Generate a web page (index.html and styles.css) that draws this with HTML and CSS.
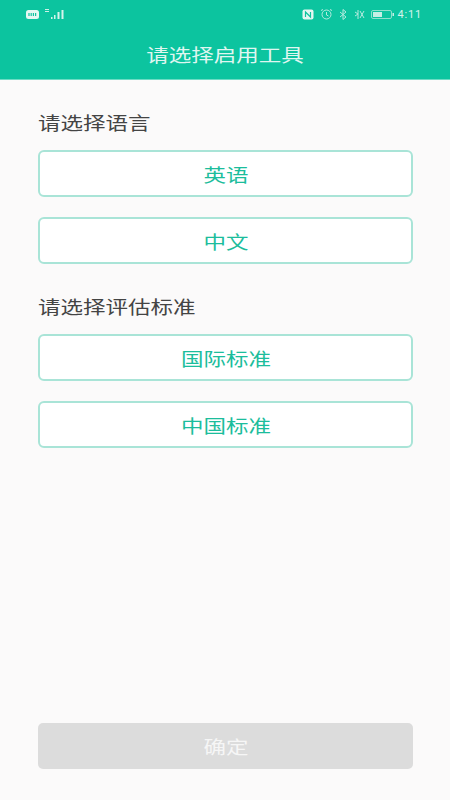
FILE: index.html
```html
<!DOCTYPE html>
<html>
<head>
  <meta charset="utf-8">
  <link rel="stylesheet" href="styles.css">
</head>
<body>
  <div class="header">
    <!-- Status bar -->
    <div class="status-bar">
      <div class="status-left">
        <svg class="icon" width="13" height="9" viewBox="0 0 13 9"><rect x="0" y="0" width="13" height="9" rx="2.5" fill="#e4f7f2"/><path d="M3 3v3M5.200 3v3M7.400 3v3M9.600 3v3" stroke="#0cc49f" stroke-width="1.2"/></svg>
        <svg class="icon" width="21" height="11" viewBox="0 0 21 11"><path d="M1 0.500h4M1 2.500h4" stroke="#cdf1e8" stroke-width="1"/><g fill="#d5f3ec"><rect x="7" y="8" width="1.500" height="2"/><rect x="10" y="6" width="1.500" height="4"/><rect x="13.500" y="3" width="2" height="7"/><rect x="17.500" y="1" width="2" height="9"/></g></svg>
      </div>
      <div class="status-right">
        <svg class="icon" width="12" height="11" viewBox="0 0 12 11"><rect x="0.500" y="0.500" width="11" height="10" rx="2" fill="#e4f7f2"/><path d="M3.500 8V3l5 5V3" fill="none" stroke="#0cc49f" stroke-width="1.2"/></svg>
        <svg class="icon" width="13" height="11" viewBox="0 0 13 11" fill="none" stroke="#b5ebdf" stroke-width="1"><circle cx="6.500" cy="5.500" r="4.500"/><path d="M6.500 3v3l2 1M1 1.500l2-1M12 1.500l-2-1"/></svg>
        <svg class="icon" width="9" height="11" viewBox="0 0 9 11" fill="none" stroke="#b5ebdf" stroke-width="1"><path d="M1 3l6 5-3 2.500V0.500l3 2.500-6 5"/></svg>
        <svg class="icon" width="11" height="11" viewBox="0 0 11 11" fill="none" stroke="#b5ebdf" stroke-width="1"><path d="M1 3l3 2-3 2M4 1v9M6 2l4 7M10 2L6 9"/></svg>
        <svg class="icon" width="23" height="9" viewBox="0 0 23 9"><rect x="0.500" y="0.500" width="20" height="8" rx="1.500" fill="none" stroke="#8fe0cd"/><rect x="2" y="2" width="9" height="5" fill="#c6efe5"/><rect x="21.500" y="3" width="1.500" height="3" fill="#c6efe5"/></svg>
        <span class="time">4:11</span>
      </div>
    </div>
    <div class="title"><span class="wide">请选择启用工具</span></div>
  </div>

  <div class="content">
    <div class="section-label"><span class="wide">请选择语言</span></div>
    <button class="option"><span class="wide">英语</span></button>
    <button class="option"><span class="wide">中文</span></button>

    <div class="section-label second"><span class="wide">请选择评估标准</span></div>
    <button class="option"><span class="wide">国际标准</span></button>
    <button class="option"><span class="wide">中国标准</span></button>

    <button class="confirm" disabled><span class="wide">确定</span></button>
  </div>
</body>
</html>
```

FILE: styles.css
```css
* { box-sizing: border-box; }
html, body {
  height: 100%;
}
body {
  margin: 0;
  background: #fbfafa;
  font-family: "Noto Sans CJK SC", "Liberation Sans", sans-serif;
  display: flex;
  flex-direction: column;
}
/* The text in this screen is wider than it is tall */
.wide {
  display: inline-block;
  transform: scaleX(1.25);
}
.header {
  height: 80px;
  background: #0cc49f;
  border-bottom: 1px solid #6cdcc4;
  color: #dff6f0;
}
.status-bar {
  height: 29px;
  padding: 0 28px 0 26px;
  display: flex;
  align-items: center;
  justify-content: space-between;
}
.status-left, .status-right {
  display: flex;
  align-items: center;
}
.status-left { gap: 5px; }
.status-right { gap: 6px; }
.icon { display: block; }
.time {
  font-family: "Roboto", sans-serif;
  font-size: 11px;
  letter-spacing: 0.8px;
  color: #d5f3ec;
  margin-left: -2px;
}
.title {
  text-align: center;
  font-size: 18px;
  line-height: 50px;
}
.content {
  flex: 1;
  padding: 0 37px 31px 38px;
  display: flex;
  flex-direction: column;
}
.section-label {
  font-size: 18px;
  line-height: 26px;
  color: #444;
  margin-top: 29px;
  margin-bottom: 15px;
}
.section-label .wide {
  transform-origin: left center;
}
.section-label.second {
  margin-top: 9px;
}
.option {
  height: 47px;
  margin-bottom: 20px;
  background: #fff;
  border: 2px solid #a9e4d7;
  border-radius: 6px;
  color: #1cbd9c;
  font-family: inherit;
  font-size: 18px;
  line-height: 24px;
  padding: 0;
}
.confirm {
  height: 46px;
  margin-top: auto;
  background: #dcdcdc;
  border: none;
  border-radius: 5px;
  color: #f6f6f6;
  font-family: inherit;
  font-size: 18px;
  padding: 0;
}
```
